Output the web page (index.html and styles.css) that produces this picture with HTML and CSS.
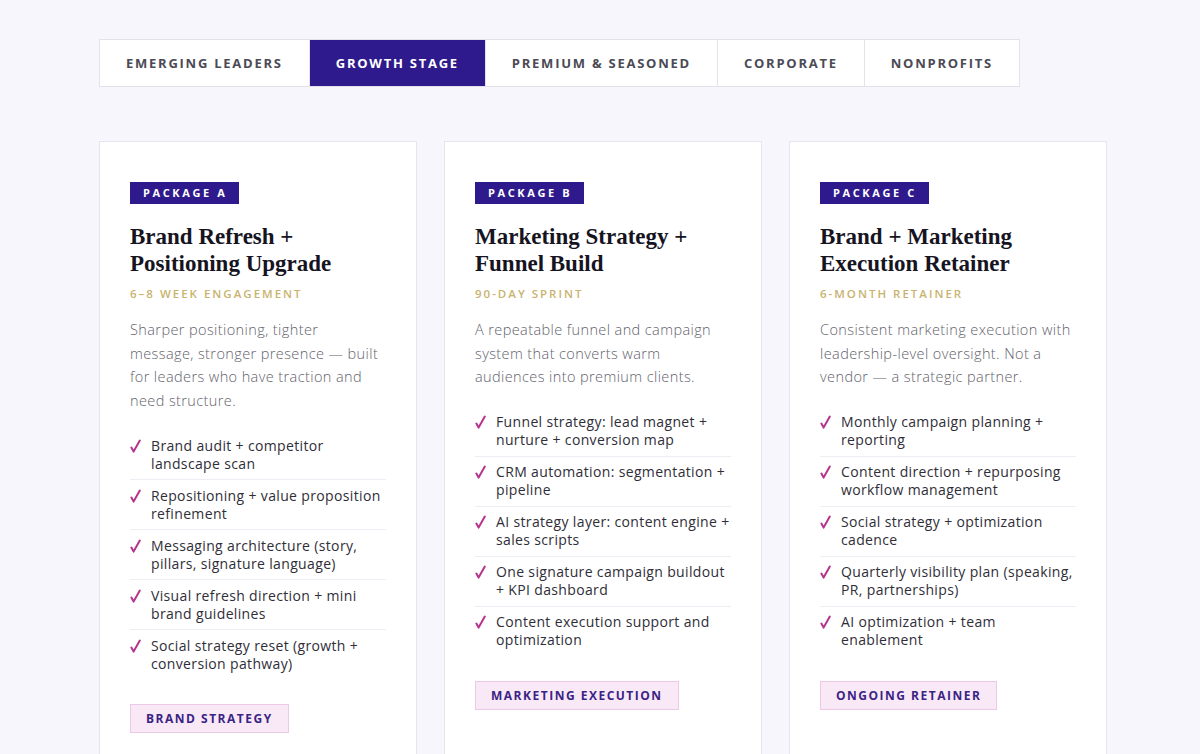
FILE: index.html
```html
<!DOCTYPE html>
<html lang="en">
<head>
<meta charset="utf-8">
<title>Packages</title>
<link rel="stylesheet" href="styles.css">
</head>
<body>
<main class="page">
  <nav class="tabs">
    <button class="tab">Emerging Leaders</button>
    <button class="tab active">Growth Stage</button>
    <button class="tab">Premium &amp; Seasoned</button>
    <button class="tab">Corporate</button>
    <button class="tab">Nonprofits</button>
  </nav>

  <section class="cards">
    <article class="card">
      <span class="badge">Package A</span>
      <h2 class="title">Brand Refresh +<br>Positioning Upgrade</h2>
      <p class="term">6–8 Week Engagement</p>
      <p class="desc">Sharper positioning, tighter message, stronger presence — built for leaders who have traction and need structure.</p>
      <ul class="list">
        <li><svg class="check" viewBox="0 0 11 14"><path d="M1.4 8.6 L3.6 12.6 L9.8 1.6"/></svg><span>Brand audit + competitor landscape scan</span></li>
        <li><svg class="check" viewBox="0 0 11 14"><path d="M1.4 8.6 L3.6 12.6 L9.8 1.6"/></svg><span>Repositioning + value proposition refinement</span></li>
        <li><svg class="check" viewBox="0 0 11 14"><path d="M1.4 8.6 L3.6 12.6 L9.8 1.6"/></svg><span>Messaging architecture (story, pillars, signature language)</span></li>
        <li><svg class="check" viewBox="0 0 11 14"><path d="M1.4 8.6 L3.6 12.6 L9.8 1.6"/></svg><span>Visual refresh direction + mini brand guidelines</span></li>
        <li><svg class="check" viewBox="0 0 11 14"><path d="M1.4 8.6 L3.6 12.6 L9.8 1.6"/></svg><span>Social strategy reset (growth + conversion pathway)</span></li>
      </ul>
      <span class="tag">Brand Strategy</span>
    </article>

    <article class="card">
      <span class="badge">Package B</span>
      <h2 class="title">Marketing Strategy +<br>Funnel Build</h2>
      <p class="term">90-Day Sprint</p>
      <p class="desc">A repeatable funnel and campaign system that converts warm audiences into premium clients.</p>
      <ul class="list">
        <li><svg class="check" viewBox="0 0 11 14"><path d="M1.4 8.6 L3.6 12.6 L9.8 1.6"/></svg><span>Funnel strategy: lead magnet + nurture + conversion map</span></li>
        <li><svg class="check" viewBox="0 0 11 14"><path d="M1.4 8.6 L3.6 12.6 L9.8 1.6"/></svg><span>CRM automation: segmentation + pipeline</span></li>
        <li><svg class="check" viewBox="0 0 11 14"><path d="M1.4 8.6 L3.6 12.6 L9.8 1.6"/></svg><span>AI strategy layer: content engine + sales scripts</span></li>
        <li><svg class="check" viewBox="0 0 11 14"><path d="M1.4 8.6 L3.6 12.6 L9.8 1.6"/></svg><span>One signature campaign buildout + KPI dashboard</span></li>
        <li><svg class="check" viewBox="0 0 11 14"><path d="M1.4 8.6 L3.6 12.6 L9.8 1.6"/></svg><span>Content execution support and optimization</span></li>
      </ul>
      <span class="tag">Marketing Execution</span>
    </article>

    <article class="card">
      <span class="badge">Package C</span>
      <h2 class="title">Brand + Marketing<br>Execution Retainer</h2>
      <p class="term">6-Month Retainer</p>
      <p class="desc">Consistent marketing execution with leadership-level oversight. Not a vendor — a strategic partner.</p>
      <ul class="list">
        <li><svg class="check" viewBox="0 0 11 14"><path d="M1.4 8.6 L3.6 12.6 L9.8 1.6"/></svg><span>Monthly campaign planning + reporting</span></li>
        <li><svg class="check" viewBox="0 0 11 14"><path d="M1.4 8.6 L3.6 12.6 L9.8 1.6"/></svg><span>Content direction + repurposing workflow management</span></li>
        <li><svg class="check" viewBox="0 0 11 14"><path d="M1.4 8.6 L3.6 12.6 L9.8 1.6"/></svg><span>Social strategy + optimization cadence</span></li>
        <li><svg class="check" viewBox="0 0 11 14"><path d="M1.4 8.6 L3.6 12.6 L9.8 1.6"/></svg><span>Quarterly visibility plan (speaking, PR, partnerships)</span></li>
        <li><svg class="check" viewBox="0 0 11 14"><path d="M1.4 8.6 L3.6 12.6 L9.8 1.6"/></svg><span>AI optimization + team enablement</span></li>
      </ul>
      <span class="tag">Ongoing Retainer</span>
    </article>
  </section>
</main>
</body>
</html>
```

FILE: styles.css
```css
* { box-sizing: border-box; }

html, body {
  margin: 0;
  padding: 0;
  background: #f7f6fc;
}

body {
  font-family: "Open Sans", "DejaVu Sans", sans-serif;
  color: #2b2b35;
  height: 754px;
  overflow: hidden;
}

.page {
  padding: 39px 0 0 99px;
}

.tabs {
  display: flex;
  width: max-content;
  border: 1px solid #e3e1ec;
  background: #fff;
}

.tab {
  font-family: inherit;
  height: 46px;
  border: 0;
  border-right: 1px solid #e3e1ec;
  background: #fff;
  color: #4b4a55;
  font-size: 13px;
  font-weight: 700;
  letter-spacing: 1.75px;
  text-transform: uppercase;
  padding: 0 26px;
  cursor: pointer;
}
.tab:last-child { border-right: 0; }
.tab.active {
  background: #2e1a8c;
  color: #fff;
}

.cards {
  display: flex;
  gap: 27px;
  margin-top: 54px;
  align-items: stretch;
}

.card {
  width: 318px;
  min-height: 640px;
  background: #fff;
  border: 1px solid #e6e4ee;
  padding: 40px 30px 40px;
  display: flex;
  flex-direction: column;
  align-items: flex-start;
}

.badge {
  background: #2e1a8c;
  color: #fff;
  font-size: 11px;
  font-weight: 700;
  letter-spacing: 2.6px;
  text-transform: uppercase;
  height: 22px;
  line-height: 22px;
  padding: 0 12px 0 13px;
}

.title {
  font-family: "Liberation Serif", "DejaVu Serif", serif;
  font-weight: 700;
  font-size: 23px;
  line-height: 27px;
  color: #16141f;
  margin: 19px 0 0;
}

.term {
  margin: 9px 0 0;
  font-size: 11.5px;
  font-weight: 600;
  letter-spacing: 2px;
  text-transform: uppercase;
  color: #c8b36f;
}

.desc {
  margin: 17px 0 0;
  font-size: 14.5px;
  font-weight: 300;
  letter-spacing: 0.4px;
  line-height: 23.5px;
  color: #63626d;
}

.list {
  list-style: none;
  margin: 18px 0 0;
  padding: 0;
  width: 100%;
}
.list li {
  display: flex;
  gap: 10px;
  padding: 6.5px 0;
  border-bottom: 1px solid #efedf3;
  font-size: 14px;
  letter-spacing: 0.35px;
  line-height: 18px;
  color: #2f2e38;
}
.list li:last-child { border-bottom: 0; }

.check {
  flex: none;
  width: 11px;
  height: 14px;
  margin-top: 2px;
  fill: none;
  stroke: #b5358c;
  stroke-width: 2;
  stroke-linecap: round;
  stroke-linejoin: round;
}

.tag {
  margin-top: 25px;
  background: #f9e9f7;
  border: 1px solid #ecc9e6;
  color: #3a2485;
  font-size: 12px;
  font-weight: 700;
  letter-spacing: 1.5px;
  text-transform: uppercase;
  height: 29px;
  line-height: 27px;
  padding: 0 15px;
}
```
